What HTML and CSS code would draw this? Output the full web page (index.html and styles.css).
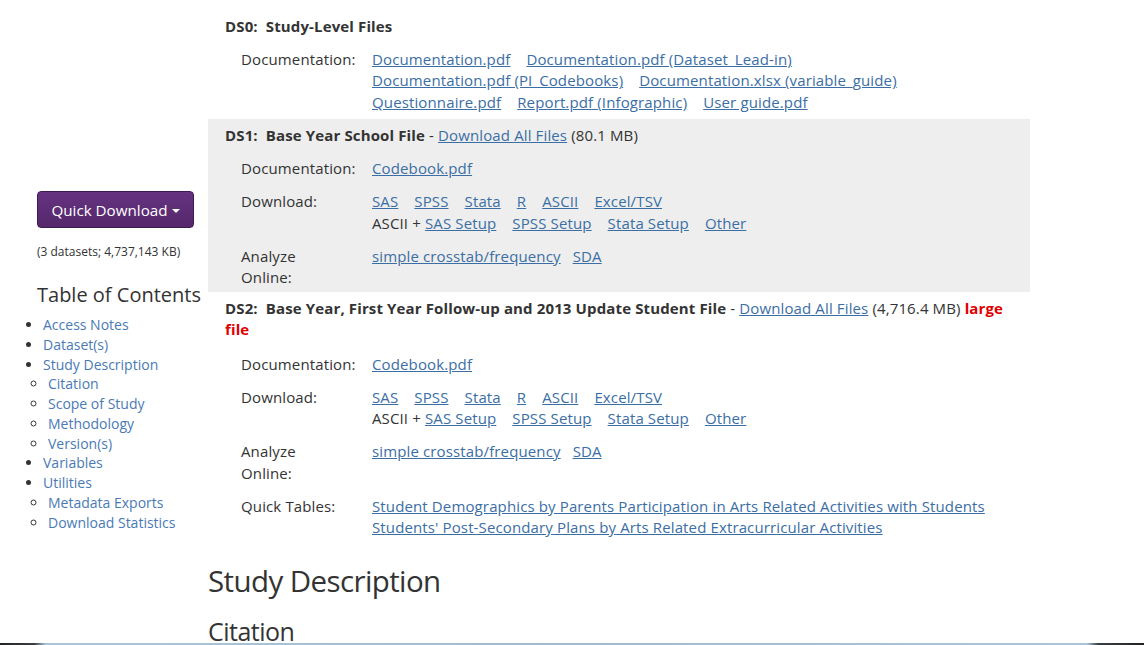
FILE: index.html
```html
<!DOCTYPE html>
<html>
<head>
<meta charset="utf-8">
<link rel="stylesheet" href="styles.css">
</head>
<body>
<div class="page">
  <aside class="sidebar">
    <button class="qd-btn">Quick Download <span class="caret"></span></button>
    <div class="qd-note">(3 datasets; 4,737,143 KB)</div>
    <h3 class="toc-title">Table of Contents</h3>
    <ul class="toc">
      <li><a href="#">Access Notes</a></li>
      <li><a href="#">Dataset(s)</a></li>
      <li><a href="#">Study Description</a>
        <ul class="toc-sub">
          <li><a href="#">Citation</a></li>
          <li><a href="#">Scope of Study</a></li>
          <li><a href="#">Methodology</a></li>
          <li><a href="#">Version(s)</a></li>
        </ul>
      </li>
      <li><a href="#">Variables</a></li>
      <li><a href="#">Utilities</a>
        <ul class="toc-sub">
          <li><a href="#">Metadata Exports</a></li>
          <li><a href="#">Download Statistics</a></li>
        </ul>
      </li>
    </ul>
  </aside>
  <main class="main">
    <section class="ds ds0">
      <div class="ds-head"><b>DS0:&nbsp; Study-Level Files</b></div>
      <div class="row">
        <div class="label">Documentation:</div>
        <div class="vals">
          <a href="#">Documentation.pdf</a><a href="#">Documentation.pdf (Dataset_Lead-in)</a><br>
          <a href="#">Documentation.pdf (PI_Codebooks)</a><a href="#">Documentation.xlsx (variable_guide)</a><br>
          <a href="#">Questionnaire.pdf</a><a href="#">Report.pdf (Infographic)</a><a href="#">User guide.pdf</a>
        </div>
      </div>
    </section>
    <section class="ds ds1 shaded">
      <div class="ds-head"><b>DS1:&nbsp; Base Year School File</b> - <a href="#" class="plain">Download All Files</a> (80.1 MB)</div>
      <div class="row">
        <div class="label">Documentation:</div>
        <div class="vals"><a href="#">Codebook.pdf</a></div>
      </div>
      <div class="row">
        <div class="label">Download:</div>
        <div class="vals">
          <a href="#">SAS</a><a href="#">SPSS</a><a href="#">Stata</a><a href="#">R</a><a href="#">ASCII</a><a href="#">Excel/TSV</a><br>
          ASCII + <a href="#">SAS Setup</a><a href="#">SPSS Setup</a><a href="#">Stata Setup</a><a href="#">Other</a>
        </div>
      </div>
      <div class="row">
        <div class="label">Analyze<br>Online:</div>
        <div class="vals small"><a href="#">simple crosstab/frequency</a><a href="#">SDA</a></div>
      </div>
    </section>
    <section class="ds ds2">
      <div class="ds-head"><b>DS2:&nbsp; Base Year, First Year Follow-up and 2013 Update Student File</b> - <a href="#" class="plain">Download All Files</a> (4,716.4 MB) <b class="large">large</b> <b class="large">file</b></div>
      <div class="row">
        <div class="label">Documentation:</div>
        <div class="vals"><a href="#">Codebook.pdf</a></div>
      </div>
      <div class="row">
        <div class="label">Download:</div>
        <div class="vals">
          <a href="#">SAS</a><a href="#">SPSS</a><a href="#">Stata</a><a href="#">R</a><a href="#">ASCII</a><a href="#">Excel/TSV</a><br>
          ASCII + <a href="#">SAS Setup</a><a href="#">SPSS Setup</a><a href="#">Stata Setup</a><a href="#">Other</a>
        </div>
      </div>
      <div class="row">
        <div class="label">Analyze<br>Online:</div>
        <div class="vals small"><a href="#">simple crosstab/frequency</a><a href="#">SDA</a></div>
      </div>
      <div class="row">
        <div class="label">Quick Tables:</div>
        <div class="vals">
          <a href="#">Student Demographics by Parents Participation in Arts Related Activities with Students</a><br>
          <a href="#">Students' Post-Secondary Plans by Arts Related Extracurricular Activities</a>
        </div>
      </div>
    </section>
    <h2 class="sec-title">Study Description</h2>
    <h3 class="sub-title">Citation</h3>
  </main>
</div>
<div class="bottom-bar"></div>
</body>
</html>
```

FILE: styles.css
```css
html, body {
  margin: 0;
  padding: 0;
  background: #fff;
  overflow: hidden;
}
body {
  font-family: "Open Sans", "Liberation Sans", sans-serif;
  font-size: 15px;
  line-height: 21.6px;
  color: #333;
  height: 645px;
}
a {
  color: #3b6ea5;
  text-decoration: underline;
}
.page {
  display: flex;
  align-items: flex-start;
}
.sidebar {
  width: 208px;
  flex: none;
  padding-top: 191px;
  box-sizing: border-box;
}
.qd-btn {
  margin-left: 37px;
  width: 157px;
  height: 37px;
  border: 1px solid #3e1a52;
  border-radius: 4px;
  background: linear-gradient(#663281, #54286b);
  color: #fff;
  font-family: "Open Sans", "Liberation Sans", sans-serif;
  font-size: 15.2px;
  padding: 0;
  display: flex;
  align-items: center;
  justify-content: center;
  gap: 4px;
}
.caret {
  display: inline-block;
  width: 0;
  height: 0;
  border-left: 4px solid transparent;
  border-right: 4px solid transparent;
  border-top: 4px solid #fff;
  margin-top: 2px;
}
.qd-note {
  margin: 15px 0 0 37px;
  font-size: 12px;
  line-height: 17px;
  color: #333;
}
.toc-title {
  margin: 21px 0 0 37px;
  font-size: 20px;
  font-weight: 400;
  line-height: 28px;
  color: #333;
}
.toc {
  margin: 6px 0 0 0;
  padding: 0 0 0 43px;
  font-size: 14px;
  line-height: 19.75px;
}
.toc a {
  color: #4a7ab5;
  text-decoration: none;
}
.toc li {
  list-style: disc;
}
.toc-sub {
  padding: 0 0 0 5px;
  margin: 0;
}
.toc-sub li {
  list-style: circle;
}
.main {
  width: 822px;
  flex: none;
  letter-spacing: 0.13px;
}
.ds {
  padding: 16px 17px 5px 17px;
}
.shaded {
  background: #eeeeee;
  padding-top: 6px;
  padding-bottom: 3px;
}
.ds2 {
  padding-top: 6px;
}
.ds-head {
  color: #333;
}
.ds1 .ds-head {
  padding-bottom: 1px;
}
.ds2 .ds-head {
  padding-bottom: 2px;
}
.ds-head b {
  font-weight: 700;
}
.ds-head .large {
  color: #e00000;
}
.row {
  display: flex;
  margin-top: 11.2px;
  padding-left: 16px;
}
.label {
  width: 131px;
  flex: none;
}
.vals a {
  margin-right: 16px;
}
.vals.small a {
  margin-right: 12px;
}
.sec-title {
  margin: 17px 0 0 0;
  font-size: 29.5px;
  font-weight: 400;
  line-height: 40px;
  color: #333;
  letter-spacing: -0.6px;
}
.sub-title {
  margin: 14px 0 0 0;
  font-size: 25px;
  font-weight: 400;
  line-height: 32px;
  color: #333;
  letter-spacing: -0.5px;
}
.bottom-bar {
  position: fixed;
  left: 0;
  right: 0;
  bottom: 0;
  height: 2px;
  background: linear-gradient(90deg, #222 0%, #3a3f44 3%, #a9c6dc 4%, #9fbcd2 50%, #a9c6dc 95%, #3a3f44 96%, #222 100%);
}
```
